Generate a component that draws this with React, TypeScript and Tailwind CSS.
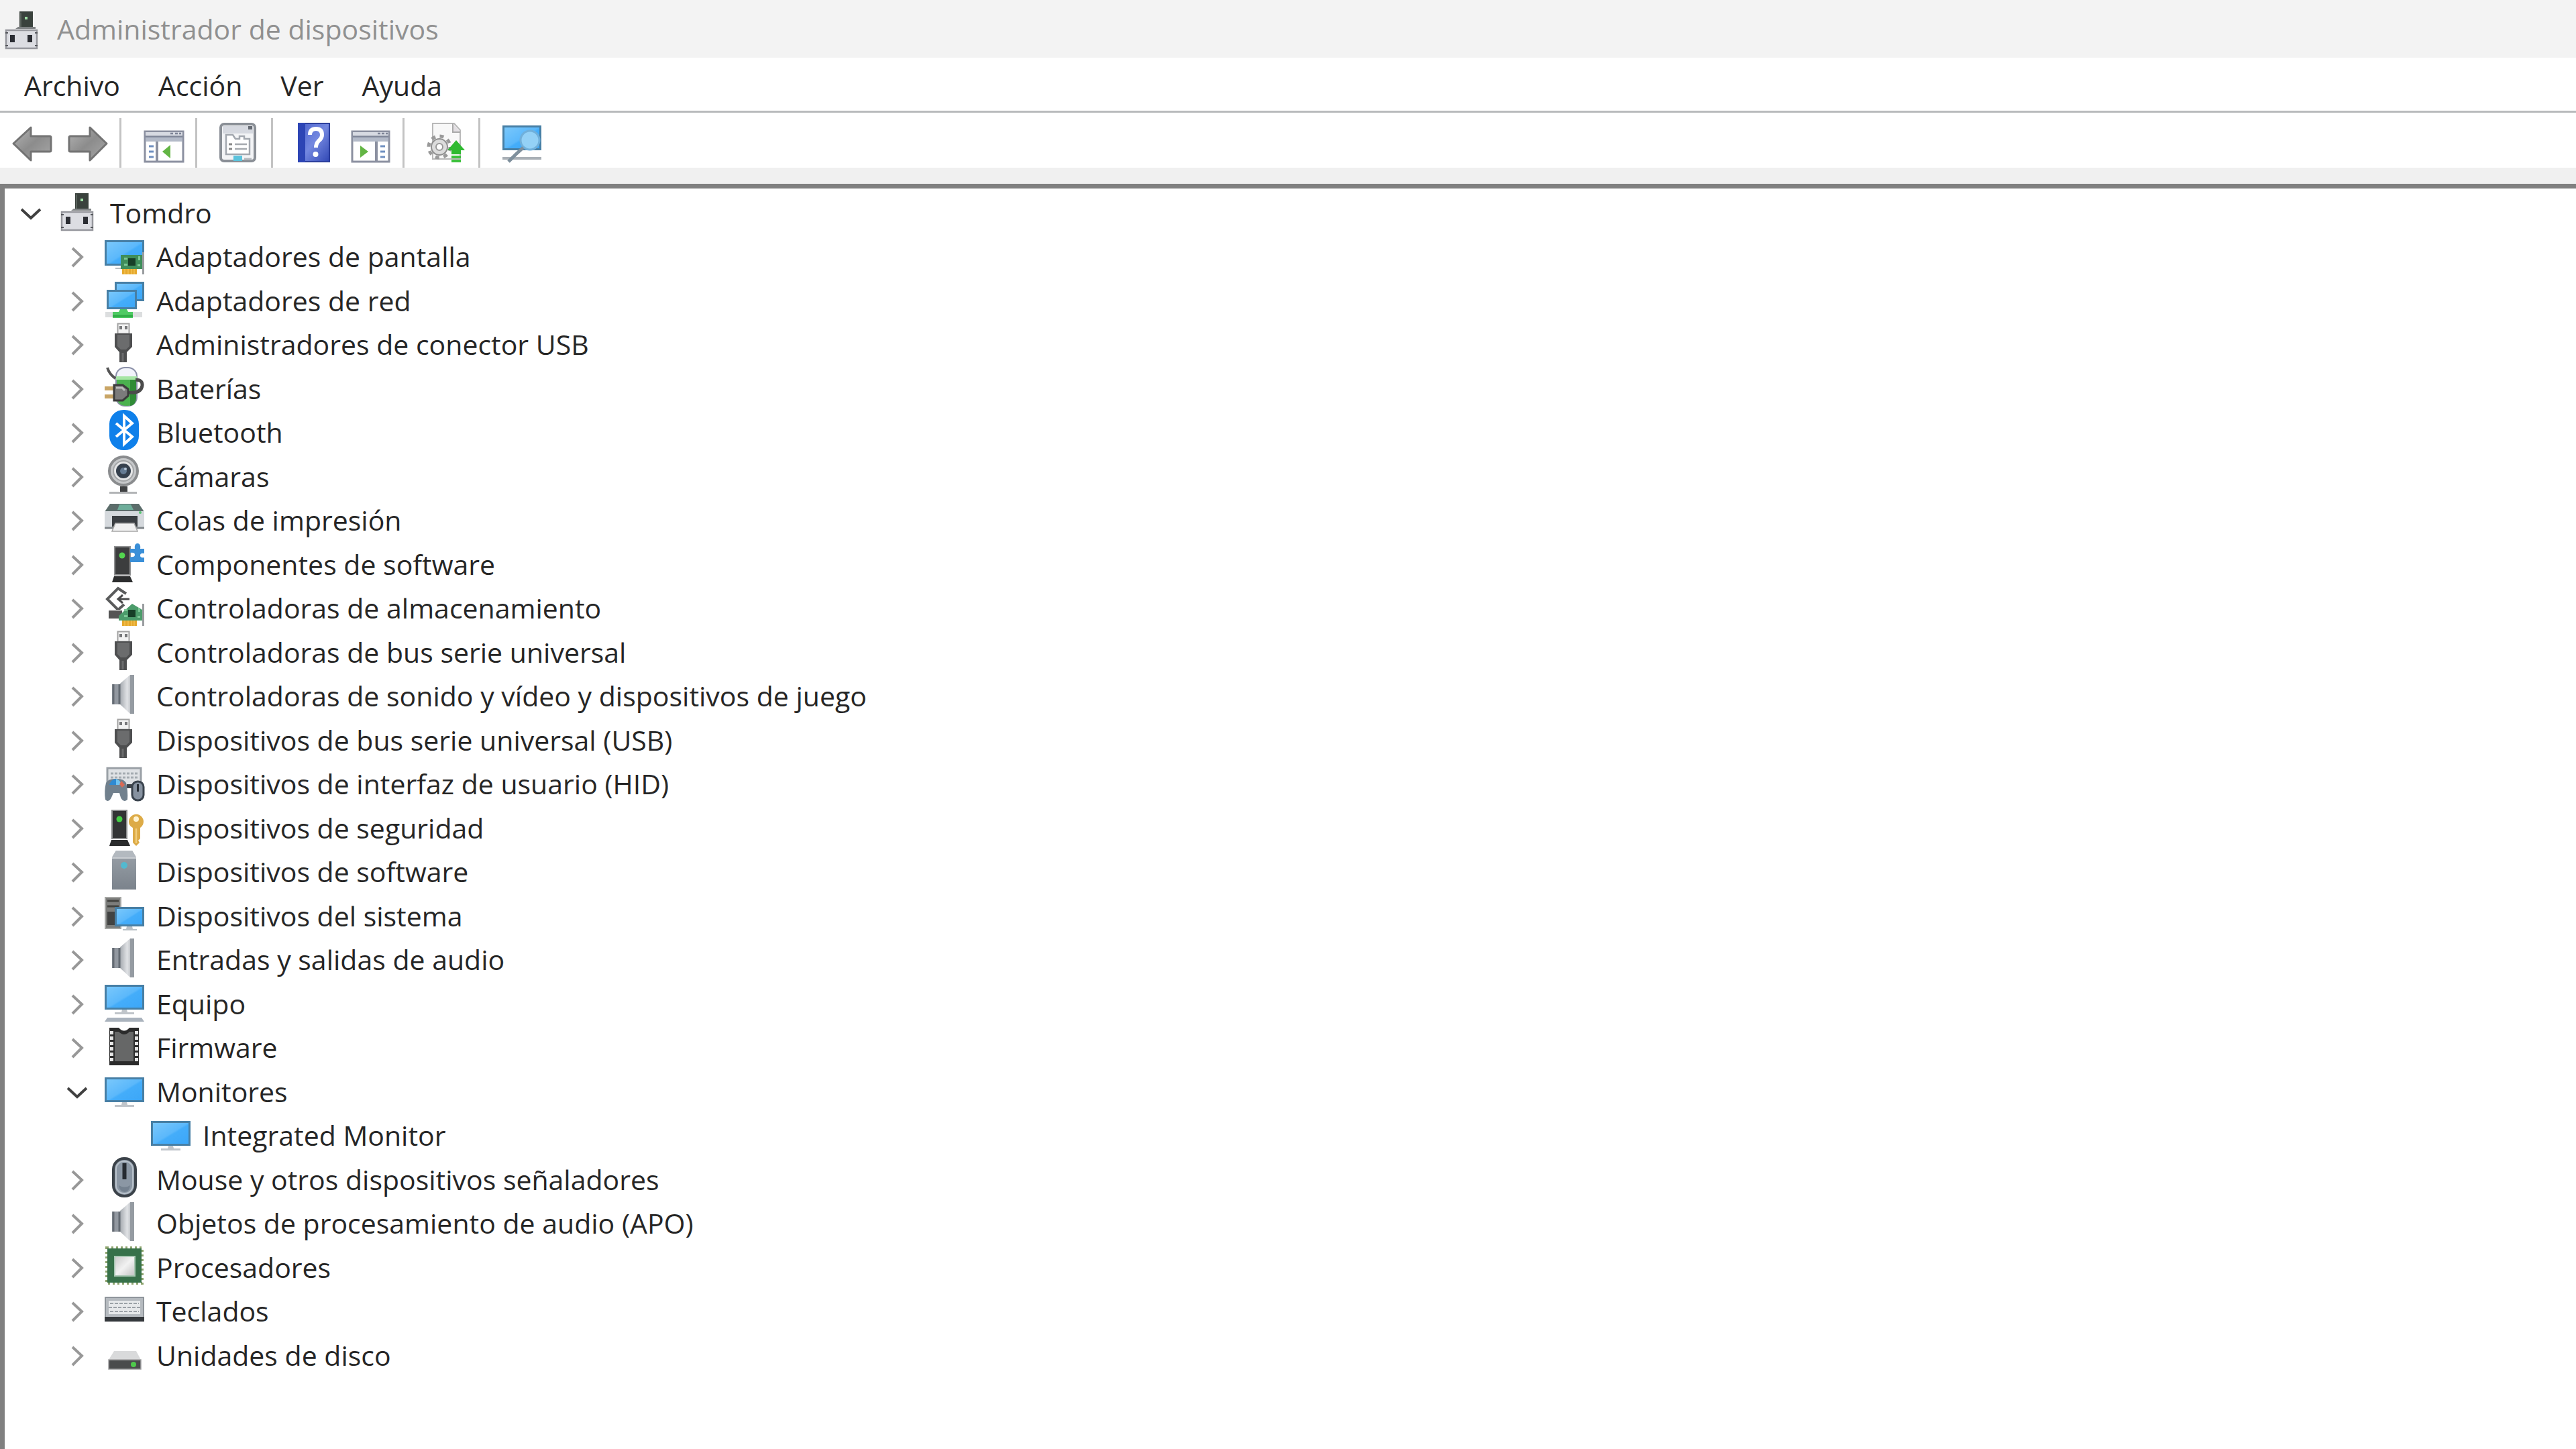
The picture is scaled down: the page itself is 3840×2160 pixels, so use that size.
import React, { useState } from 'react';

interface DeviceNode {
  id: string;
  label: string;
  icon: React.FC<IconProps>;
  children?: DeviceNode[];
}

interface IconProps {
  className?: string;
}

const Icon: React.FC<React.PropsWithChildren<IconProps>> = ({ className = '', children }) => (
  <svg viewBox="0 0 60 60" aria-hidden="true" className={`w-[60px] h-[60px] shrink-0 overflow-visible ${className}`}>
    {children}
  </svg>
);

// Gradients shared by every icon
const Gradients = () => (
  <svg width="0" height="0" aria-hidden="true" className="absolute">
    <defs>
      <linearGradient id="screen" x1="0" y1="0" x2="1" y2="1">
        <stop offset="0" stopColor="#7cc9fb" />
        <stop offset="0.5" stopColor="#5bb8fb" />
        <stop offset="0.55" stopColor="#44adfa" />
        <stop offset="1" stopColor="#3ba6f8" />
      </linearGradient>
      <linearGradient id="metal" x1="0" y1="0" x2="1" y2="0">
        <stop offset="0" stopColor="#a4a9af" />
        <stop offset="0.5" stopColor="#e0e2e5" />
        <stop offset="0.8" stopColor="#b9bdc2" />
        <stop offset="1" stopColor="#8b9198" />
      </linearGradient>
      <linearGradient id="arrow" x1="0" y1="0" x2="1" y2="1">
        <stop offset="0" stopColor="#b5b5b5" />
        <stop offset="0.5" stopColor="#8c8c8c" />
        <stop offset="1" stopColor="#a8a8a8" />
      </linearGradient>
      <linearGradient id="plastic" x1="0" y1="0" x2="0" y2="1">
        <stop offset="0" stopColor="#9aa1a9" />
        <stop offset="1" stopColor="#7b838c" />
      </linearGradient>
      <linearGradient id="silver" x1="0" y1="0" x2="1" y2="1">
        <stop offset="0" stopColor="#c9c9c9" />
        <stop offset="0.5" stopColor="#f2f2f2" />
        <stop offset="1" stopColor="#c2c2c2" />
      </linearGradient>
      <linearGradient id="book" x1="0" y1="0" x2="1" y2="1">
        <stop offset="0" stopColor="#4a62cc" />
        <stop offset="0.5" stopColor="#7488e0" />
        <stop offset="1" stopColor="#3047b4" />
      </linearGradient>
    </defs>
  </svg>
);

const Screen = ({ x, y, w, h }: { x: number; y: number; w: number; h: number }) => (
  <rect x={x + 1.5} y={y + 1.5} width={w - 3} height={h - 3} fill="url(#screen)" stroke="#477fa5" strokeWidth="3" />
);

const Card = ({ children }: React.PropsWithChildren) => (
  <>
    {children}
    <path d="M30 35h5v3h-5zM30 44h5v3h-5zM51 33h3v6h-3zM50 45h4v3h-4z" fill="#7cc795" />
    <rect x="36" y="36" width="11" height="11" fill="#173f28" />
    <path d="M27 52h22v8H27z" fill="#e6a92d" />
    <path d="M31 52v8M36 52v8M41 52v8M45 52v8" stroke="#f1c052" strokeWidth="1.5" />
    <path d="M58.500 27v33" stroke="#9a9da0" strokeWidth="3" />
  </>
);

const ComputerIcon: React.FC<IconProps> = ({ className }) => (
  <Icon className={className}>
    <rect x="26" y="4" width="20" height="25" fill="#3a423d" />
    <path d="M28 6v22" stroke="#59625c" strokeWidth="2" />
    <rect x="34" y="12" width="4" height="4" fill="#9fe0a6" />
    <path d="M20 30h30v-3H24z" fill="#7f8284" />
    <rect x="6" y="32" width="46" height="27" fill="#dcdde2" stroke="#96979d" strokeWidth="2.500" />
    <path d="M5 36h4M49 36h4M5 55h4M49 55h4" stroke="#55575c" strokeWidth="2" />
    <rect x="12" y="39" width="7" height="11" fill="#2b2d33" />
    <rect x="38" y="39" width="7" height="11" fill="#2b2d33" />
  </Icon>
);

const DisplayAdapterIcon = () => (
  <Icon>
    <Screen x={1} y={9} w={59} h={38} />
    <path d="M17 51h10" stroke="#b9bdc1" strokeWidth="2" />
    <Card>
      <path d="M25 31h32v21H25z" fill="#3f8e5b" />
    </Card>
  </Icon>
);

const NetworkIcon = () => (
  <Icon>
    <Screen x={16} y={5} w={44} h={29} />
    <Screen x={4} y={17} w={45} h={29} />
    <path d="M2 50h55v8H2z" fill="#dcdedf" />
    <path d="M24 46h10l2 4h7v9H13v-9h9z" fill="#4ecb63" />
    <path d="M13 56h30" stroke="#2faa45" strokeWidth="3" />
  </Icon>
);

const UsbIcon = () => (
  <Icon>
    <rect x="20.500" y="2.500" width="17" height="15" fill="#f2f2f2" stroke="#a3a3a3" strokeWidth="2" />
    <path d="M23 6h4v5h-4zM31 6h4v5h-4z" fill="#77787a" />
    <path d="M16 17h26v20l-8 8v15H23V45l-7-8z" fill="#4e4f50" />
    <path d="M20 19h18v17l-5 5h-8l-5-5z" fill="#6b6c6d" />
    <path d="M28 46v13" stroke="#6b6c6d" strokeWidth="3" />
  </Icon>
);

const BatteryIcon = () => (
  <Icon>
    <rect x="18" y="2" width="31" height="57" rx="13" fill="#f1f3fa" stroke="#8b90a8" strokeWidth="2" />
    <path d="M19 16h29v30q0 13-14 13T19 46z" fill="#4bb14f" />
    <path d="M18 15h31v5H18z" fill="#a5e5a4" />
    <path d="M39 20h9v28q-1 10-9 11z" fill="#2f8b36" />
    <path d="M5 2q3 10 12 16" fill="none" stroke="#555" strokeWidth="4" />
    <path d="M36 39q19 2 21-10 1-9-10-9" fill="none" stroke="#4b4b4b" strokeWidth="5" />
    <path d="M1 33h14M1 45h14" stroke="#c9a565" strokeWidth="6" />
    <path d="M15 28h13l8 6v10l-8 7H15z" fill="#7b7b7b" stroke="#3c3c3c" strokeWidth="3" />
    <path d="M18 32h9l4 4" fill="none" stroke="#bcbcbc" strokeWidth="3" />
  </Icon>
);

const BluetoothIcon = () => (
  <Icon>
    <rect x="8" y="0" width="44" height="60" rx="21" fill="#0f80ea" />
    <path d="M18 20l24 20-12 11V9l12 11-24 20" fill="none" stroke="#fff" strokeWidth="4" strokeLinejoin="miter" />
  </Icon>
);

const CameraIcon = () => (
  <Icon>
    <circle cx="29" cy="25" r="21" fill="#c6c8ca" stroke="#8a8c8e" strokeWidth="4" />
    <circle cx="29" cy="25" r="15" fill="#e4e5e6" stroke="#a3a5a7" strokeWidth="2" />
    <circle cx="29" cy="25" r="11" fill="#35404d" />
    <circle cx="29" cy="25" r="5" fill="#657b93" />
    <circle cx="32" cy="22" r="2" fill="#b9c9da" />
    <path d="M24 48h11v8H24z" fill="#3f4143" />
    <path d="M8 57.500h41" stroke="#b2b4b6" strokeWidth="3" />
  </Icon>
);

const PrinterIcon = () => (
  <Icon>
    <path d="M9 9h43l8 12H1z" fill="#5c6d6b" />
    <path d="M23 10h17l4 8H20z" fill="#6fae9b" />
    <path d="M1 20h59v25H1z" fill="#d5d9dd" />
    <path d="M1 45h59" stroke="#808589" strokeWidth="3" />
    <circle cx="54" cy="22" r="2" fill="#58c672" />
    <path d="M12 27h38v16H12z" fill="#3a3e42" />
    <path d="M17 38h28l5 12H12z" fill="#f0f0f0" stroke="#a8a8a8" strokeWidth="1.500" />
  </Icon>
);

const SoftwareComponentIcon = () => (
  <Icon>
    <rect x="16" y="7" width="23" height="42" fill="#3c3d3e" stroke="#909192" strokeWidth="2" />
    <circle cx="27" cy="20" r="4.500" fill="#53d64f" />
    <path d="M15 51h24l4 9H12z" fill="#2c2d2e" />
    <path d="M39 10h7q-1-8 4-8t4 8h6v7q-6-1-6 3t6 3v7H39v-8q7 1 7-3t-7-3z" fill="#3a8fd8" />
  </Icon>
);

const StorageIcon = () => (
  <Icon>
    <path d="M33 12L21 4 5 20l16 16 9-8" fill="none" stroke="#5a5b5c" strokeWidth="4" />
    <path d="M38 20H22m6-6l-7 6 7 6" fill="none" stroke="#4a4b4c" strokeWidth="3" />
    <path d="M7 38h20v11H7z" fill="#555" />
    <path d="M7 37h20" stroke="#a5a5a5" strokeWidth="2" />
    <Card>
      <path d="M22 45l20-18 15 9v16H22z" fill="#4c9c6b" />
    </Card>
  </Icon>
);

const SpeakerIcon = () => (
  <Icon>
    <path d="M24 15L39 2h6v58h-6L24 46z" fill="url(#metal)" />
    <path d="M39 2h6v58h-6z" fill="#959ba2" />
    <rect x="12" y="16" width="12" height="30" fill="#9298a0" />
    <path d="M14 16v30M23 16v30" stroke="#646b73" strokeWidth="3" />
  </Icon>
);

const HidIcon = () => (
  <Icon>
    <rect x="5" y="10" width="50" height="28" fill="#dfe2e5" stroke="#9aa0a6" strokeWidth="3" />
    <path d="M10 18h41M10 24h41" stroke="#a5abb1" strokeWidth="3" strokeDasharray="4 2" />
    <path d="M34 34h10v6H34z" fill="#3e444a" />
    <path d="M3 32q4-7 15-6 11-1 15 6 3 12 2 25-6 5-10-3l-2-7h-9l-3 7q-4 8-9 3-2-13 1-25z" fill="#71808d" />
    <path d="M8 35q2-8 10-9v9z" fill="#2f8ad2" />
    <path d="M18 26q6 1 8 9h-8z" fill="#6fc1ef" />
    <path d="M26 29l5 6-4 4-4-5z" fill="#d96a55" />
    <rect x="42" y="30" width="17" height="28" rx="8" fill="#8792a0" stroke="#3a434d" strokeWidth="3" />
    <path d="M50.500 34v11" stroke="#252c34" strokeWidth="3" />
  </Icon>
);

const SecurityIcon = () => (
  <Icon>
    <rect x="12" y="7" width="22" height="42" fill="#333435" stroke="#8e8f90" strokeWidth="2" />
    <circle cx="23" cy="20" r="4.500" fill="#45d046" />
    <path d="M11 51h24l4 9H8z" fill="#2b2c2d" />
    <path d="M37 24a11 11 0 1 1 17 9v16l-3 3 2 3-5 5-5-5V33q-6-3-6-9z" fill="#ddab47" />
    <circle cx="48" cy="20" r="4" fill="#fff3d0" />
    <path d="M48 34v22" stroke="#f1cd7b" strokeWidth="2.500" />
  </Icon>
);

const SoftwareDeviceIcon = () => (
  <Icon>
    <path d="M18 2h24l6 10v48H12V12z" fill="url(#plastic)" />
    <path d="M18 2h24l6 10H12z" fill="#b3b9bf" />
    <path d="M12 13h36" stroke="#c9cdd1" strokeWidth="2" />
    <circle cx="30" cy="24" r="5" fill="#53b9cf" />
  </Icon>
);

const SystemIcon = () => (
  <Icon>
    <rect x="2" y="6" width="23" height="46" fill="#7c7d7b" stroke="#a5a6a4" strokeWidth="2" />
    <path d="M5 11h17M5 19h17" stroke="#42433f" strokeWidth="3" />
    <path d="M5 27h13v20H5z" fill="#424342" />
    <Screen x={16} y={20} w={44} h={29} />
    <path d="M34 49h8l1 4h6v2H28v-2h5z" fill="#b9c0c6" />
  </Icon>
);

const PcIcon = () => (
  <Icon>
    <Screen x={1} y={5} w={59} h={37} />
    <path d="M27 42h7l1 4h10v3H16v-3h10z" fill="#c0c5ca" />
    <path d="M5 54h51l4 6H1z" fill="#aab3bd" />
  </Icon>
);

const FirmwareIcon = () => (
  <Icon>
    <path d="M8 4h14q8 9 16 0h14v56H8z" fill="#2b2b2b" />
    <path d="M16 10h6q8 8 16 0h6v44H16z" fill="#666767" />
    <path d="M11.500 9v46M48.500 9v46" stroke="#e4e4e4" strokeWidth="5" strokeDasharray="5 3" />
  </Icon>
);

const MonitorIcon = () => (
  <Icon>
    <Screen x={1} y={12} w={59} h={37} />
    <path d="M27 49h7l1 4h10v3H16v-3h10z" fill="#c0c5ca" />
  </Icon>
);

const MouseIcon = () => (
  <Icon>
    <rect x="14" y="2" width="33" height="56" rx="16" fill="#8b97a4" stroke="#3b4249" strokeWidth="4" />
    <rect x="18" y="6" width="25" height="48" rx="12" fill="none" stroke="#b8c1ca" strokeWidth="2" />
    <path d="M30.500 9v24" stroke="#262b31" strokeWidth="6" />
    <path d="M22 42q9 5 17 0-1 9-8 10-8-1-9-10z" fill="#74818f" />
  </Icon>
);

const CpuIcon = () => (
  <Icon>
    <rect x="4" y="4" width="53" height="53" fill="none" stroke="#8fa56f" strokeWidth="4" strokeDasharray="3 4" />
    <rect x="5" y="5" width="51" height="51" fill="#37714a" />
    <rect x="16" y="17" width="30" height="29" fill="url(#silver)" stroke="#a9c7b3" strokeWidth="2" />
  </Icon>
);

const KeyboardIcon = () => (
  <Icon>
    <rect x="2" y="13" width="57" height="35" fill="#b5babf" stroke="#8f959b" strokeWidth="2" />
    <path d="M7 18h47v20H7z" fill="#e6e8ea" />
    <path d="M9 22h43M7 28h47M9 34h43" stroke="#9ba1a7" strokeWidth="2" strokeDasharray="5 2" />
    <path d="M1 42h59v7H1z" fill="#34383c" />
  </Icon>
);

const DiskIcon = () => (
  <Icon>
    <path d="M15 27h33l7 13H7z" fill="#d9dadb" />
    <path d="M7 40h48v14H7z" fill="#4a4b4c" stroke="#a2a3a4" strokeWidth="1.500" />
    <circle cx="44" cy="47" r="4" fill="#4fc94c" />
  </Icon>
);

const BackIcon = () => (
  <Icon>
    <path d="M2 31L28 7v13h28q2 0 2 2v19q0 2-2 2H28v13z" fill="url(#arrow)" stroke="#737373" strokeWidth="3" strokeLinejoin="round" />
  </Icon>
);

const ForwardIcon = () => (
  <Icon>
    <path d="M58 31L33 7v13H4q-2 0-2 2v19q0 2 2 2h29v13z" fill="url(#arrow)" stroke="#737373" strokeWidth="3" strokeLinejoin="round" />
  </Icon>
);

const ConsoleTreeIcon = () => (
  <Icon>
    <rect x="2" y="13" width="57" height="45" fill="#fff" stroke="#8b90a0" strokeWidth="3" />
    <path d="M3 14h55v5H3z" fill="#d7dae2" />
    <path d="M3 20h55v8H3z" fill="#b3bac8" />
    <path d="M3 20.500h55M40 16h4M47 16h4M53 16h3" stroke="#7e8597" strokeWidth="2.500" />
    <path d="M20 28v29" stroke="#8b90a0" strokeWidth="4" />
    <path d="M8 35h7M8 43h7M8 51h7" stroke="#6f8fc0" strokeWidth="3" />
    <path d="M40 33v20L28 43z" fill="#63b544" />
  </Icon>
);

const PropertiesIcon = () => (
  <Icon>
    <rect x="2" y="2" width="51" height="55" rx="5" fill="#f3f4f6" stroke="#8a8f96" strokeWidth="4" />
    <path d="M5 5h45v11H5z" fill="#d6d9e0" />
    <path d="M43 5h6v5h-6z" fill="#666b73" />
    <path d="M10 47V18h10l4 6h6v-4h7v4h8v23z" fill="#fff" stroke="#a3a8af" strokeWidth="2.500" />
    <path d="M14 32h5M14 39h5" stroke="#888" strokeWidth="3" />
    <path d="M23 32h18M23 39h18" stroke="#a5a9ae" strokeWidth="2.500" />
    <path d="M21 49h13v8H21z" fill="#5bc3dc" />
    <path d="M37 54h11" stroke="#b5b9bf" strokeWidth="3" />
  </Icon>
);

const HelpIcon = () => (
  <Icon>
    <rect x="5" y="1" width="46" height="57" fill="url(#book)" stroke="#2c3f9d" strokeWidth="2" />
    <path d="M4 0h11v59H4z" fill="#2d45b5" />
    <path d="M22 18q0-9 9-9 9 0 9 9 0 5-5 9-4 4-4 10" fill="none" stroke="#fff" strokeWidth="6" />
    <circle cx="30.500" cy="47" r="4" fill="#fff" />
  </Icon>
);

const ActionPaneIcon = () => (
  <Icon>
    <rect x="2" y="13" width="55" height="45" fill="#fff" stroke="#8b90a0" strokeWidth="3" />
    <path d="M3 14h53v5H3z" fill="#d7dae2" />
    <path d="M3 20h53v8H3z" fill="#b3bac8" />
    <path d="M3 20.500h53M40 16h4M46 16h4M52 16h3" stroke="#7e8597" strokeWidth="2.500" />
    <path d="M38 28v29" stroke="#8b90a0" strokeWidth="4" />
    <path d="M44 35h7M44 43h7M44 51h7" stroke="#6f8fc0" strokeWidth="3" />
    <path d="M14 34v18l12-9z" fill="#63b544" />
  </Icon>
);

const UpdateDriverIcon = () => (
  <Icon>
    <path d="M9 1h32l9 10v43H9z" fill="#f8f8f8" stroke="#b9b9b9" strokeWidth="2" />
    <path d="M39 1v13h11" fill="#e3dfe3" stroke="#a9a9a9" strokeWidth="2" />
    <circle cx="19" cy="36" r="16" fill="none" stroke="#9a9a9a" strokeWidth="5" strokeDasharray="6 6.570" />
    <circle cx="19" cy="36" r="12" fill="#dcdcdc" stroke="#8f8f8f" strokeWidth="2" />
    <circle cx="19" cy="36" r="5" fill="#fff" stroke="#999" strokeWidth="2" />
    <path d="M44 26l13 15h-6v6H37v-6h-6z" fill="#2fba30" />
    <path d="M37 51h14M37 57h14" stroke="#3cc13c" strokeWidth="4" />
  </Icon>
);

const ScanHardwareIcon = () => (
  <Icon>
    <Screen x={0} y={4} w={58} h={37} />
    <path d="M0 53h58" stroke="#a9b0b6" strokeWidth="4" />
    <circle cx="41" cy="26" r="14" fill="#94d1f6" stroke="#70b0db" strokeWidth="3" />
    <path d="M31 37L20 47 9 58" fill="none" stroke="#7e8f9c" strokeWidth="5" />
  </Icon>
);

const ToolbarButton = ({ label, children }: React.PropsWithChildren<{ label: string }>) => (
  <button type="button" aria-label={label} title={label}>
    {children}
  </button>
);

const Separator = () => <div className="w-[3px] h-[74px] ml-[17px] mr-[33px] bg-[#c3c3c3]" />;

const DEVICES: DeviceNode[] = [
  {
    id: 'root',
    label: 'Tomdro',
    icon: ComputerIcon,
    children: [
      { id: 'display', label: 'Adaptadores de pantalla', icon: DisplayAdapterIcon, children: [] },
      { id: 'network', label: 'Adaptadores de red', icon: NetworkIcon, children: [] },
      { id: 'usb-connector', label: 'Administradores de conector USB', icon: UsbIcon, children: [] },
      { id: 'battery', label: 'Baterías', icon: BatteryIcon, children: [] },
      { id: 'bluetooth', label: 'Bluetooth', icon: BluetoothIcon, children: [] },
      { id: 'camera', label: 'Cámaras', icon: CameraIcon, children: [] },
      { id: 'print', label: 'Colas de impresión', icon: PrinterIcon, children: [] },
      { id: 'components', label: 'Componentes de software', icon: SoftwareComponentIcon, children: [] },
      { id: 'storage', label: 'Controladoras de almacenamiento', icon: StorageIcon, children: [] },
      { id: 'usb', label: 'Controladoras de bus serie universal', icon: UsbIcon, children: [] },
      { id: 'sound', label: 'Controladoras de sonido y vídeo y dispositivos de juego', icon: SpeakerIcon, children: [] },
      { id: 'usb-devices', label: 'Dispositivos de bus serie universal (USB)', icon: UsbIcon, children: [] },
      { id: 'hid', label: 'Dispositivos de interfaz de usuario (HID)', icon: HidIcon, children: [] },
      { id: 'security', label: 'Dispositivos de seguridad', icon: SecurityIcon, children: [] },
      { id: 'software', label: 'Dispositivos de software', icon: SoftwareDeviceIcon, children: [] },
      { id: 'system', label: 'Dispositivos del sistema', icon: SystemIcon, children: [] },
      { id: 'audio', label: 'Entradas y salidas de audio', icon: SpeakerIcon, children: [] },
      { id: 'pc', label: 'Equipo', icon: PcIcon, children: [] },
      { id: 'firmware', label: 'Firmware', icon: FirmwareIcon, children: [] },
      {
        id: 'monitors',
        label: 'Monitores',
        icon: MonitorIcon,
        children: [{ id: 'integrated', label: 'Integrated Monitor', icon: MonitorIcon }],
      },
      { id: 'mouse', label: 'Mouse y otros dispositivos señaladores', icon: MouseIcon, children: [] },
      { id: 'apo', label: 'Objetos de procesamiento de audio (APO)', icon: SpeakerIcon, children: [] },
      { id: 'cpu', label: 'Procesadores', icon: CpuIcon, children: [] },
      { id: 'keyboard', label: 'Teclados', icon: KeyboardIcon, children: [] },
      { id: 'disk', label: 'Unidades de disco', icon: DiskIcon, children: [] },
    ],
  },
];

const INDENT = ['pl-0', 'pl-[69px]', 'pl-[138px]'];

// Flattens the open branches into the list of visible rows
const visibleRows = (nodes: DeviceNode[], open: string[], level = 0): { node: DeviceNode; level: number }[] =>
  nodes.flatMap((node) => [
    { node, level },
    ...(open.includes(node.id) ? visibleRows(node.children ?? [], open, level + 1) : []),
  ]);

export default function App() {
  const [open, setOpen] = useState<string[]>(['root', 'monitors']);

  const toggle = (id: string) => {
    setOpen((prev) => (prev.includes(id) ? prev.filter((x) => x !== id) : [...prev, id]));
  };

  return (
    <div className="min-h-screen flex flex-col bg-white text-[#262626] text-[41px] leading-[54px] font-['Open_Sans','Noto_Sans',sans-serif]">
      <Gradients />

      <header className="h-[86px] flex items-center pl-[3px] bg-[#f3f3f3]">
        <ComputerIcon />
        <h1 className="ml-[22px] text-[#909090]">Administrador de dispositivos</h1>
      </header>

      <nav className="h-[79px] flex items-center gap-[57px] pt-[2px] pl-[36px]">
        <button type="button">Archivo</button>
        <button type="button">Acción</button>
        <button type="button">Ver</button>
        <button type="button">Ayuda</button>
      </nav>

      <div role="toolbar" aria-label="Herramientas" className="h-[85px] flex items-end pl-[18px] border-t-3 border-[#b8babc]">
        <div className="flex items-center">
          <ToolbarButton label="Atrás"><BackIcon /></ToolbarButton>
          <div className="w-[23px]" />
          <ToolbarButton label="Adelante"><ForwardIcon /></ToolbarButton>
          <Separator />
          <ToolbarButton label="Mostrar u ocultar árbol de consola"><ConsoleTreeIcon /></ToolbarButton>
          <Separator />
          <ToolbarButton label="Propiedades"><PropertiesIcon /></ToolbarButton>
          <Separator />
          <ToolbarButton label="Ayuda"><HelpIcon /></ToolbarButton>
          <div className="w-[23px]" />
          <ToolbarButton label="Mostrar u ocultar panel de acciones"><ActionPaneIcon /></ToolbarButton>
          <Separator />
          <ToolbarButton label="Actualizar controlador"><UpdateDriverIcon /></ToolbarButton>
          <Separator />
          <ToolbarButton label="Buscar cambios de hardware"><ScanHardwareIcon /></ToolbarButton>
        </div>
      </div>

      <div className="h-6 bg-[#f0f0f0]" />

      <main className="flex-1 pl-[10px] pt-[3px] border-t-[7px] border-l-[7px] border-[#808080]">
        <ul role="tree" aria-label="Dispositivos">
          {visibleRows(DEVICES, open).map(({ node, level }) => {
            const isOpen = open.includes(node.id);
            return (
              <li
                key={node.id}
                role="treeitem"
                aria-level={level + 1}
                aria-expanded={node.children ? isOpen : undefined}
                className={`flex items-center odd:h-[65px] even:h-[66px] ${INDENT[level]}`}
              >
                {node.children ? (
                  <button
                    type="button"
                    aria-label={node.label}
                    onClick={() => toggle(node.id)}
                    className="w-[60px] h-[60px] flex items-center justify-center pt-[2px]"
                  >
                    <svg viewBox="0 0 32 32" fill="none" className="w-8 h-8" strokeWidth="4">
                      {isOpen ? <path d="M1 10l14 13L29 10" stroke="#404040" /> : <path d="M8 3l14 13L8 30" stroke="#989898" />}
                    </svg>
                  </button>
                ) : (
                  <div className="w-[60px]" />
                )}
                <div className="self-start ml-[9px] mr-[18px]">
                  <node.icon />
                </div>
                <span className="whitespace-nowrap">{node.label}</span>
              </li>
            );
          })}
        </ul>
      </main>
    </div>
  );
}
